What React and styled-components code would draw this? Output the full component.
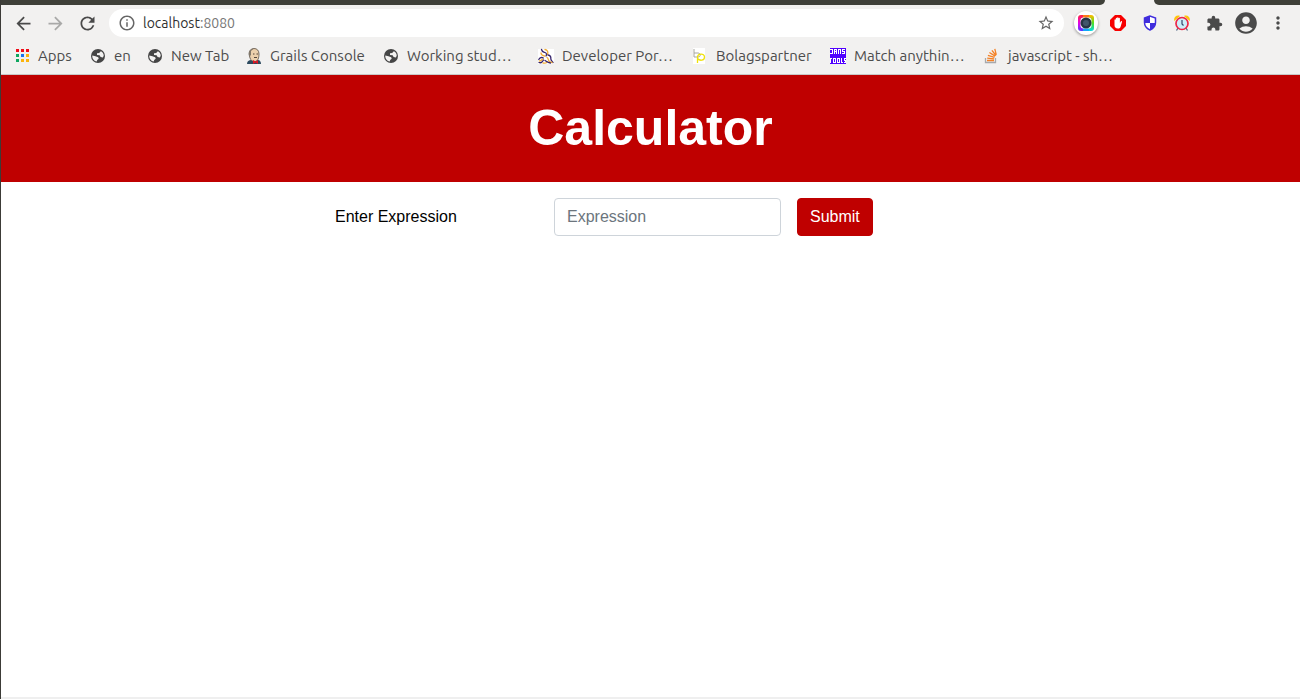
import React from "react";
import styled, { createGlobalStyle } from "styled-components";
import {
  MdArrowBack,
  MdArrowForward,
  MdRefresh,
  MdInfoOutline,
  MdStarBorder,
  MdExtension,
  MdAccountCircle,
  MdMoreVert,
} from "react-icons/md";

const GlobalStyle = createGlobalStyle`
  *, *::before, *::after { box-sizing: border-box; }
  body { margin: 0; background: #fff; }
  svg { display: block; flex: none; }
`;

const Window = styled.div`
  min-height: 100vh;
  display: flex;
  flex-direction: column;
  border-left: 1px solid #3c3b37;
  font-family: "Liberation Sans", Arial, sans-serif;
`;

const Chrome = styled.header`
  background: #f2f1f0;
  border-bottom: 1px solid #c9c8c7;
  color: #4c4c4c;
  font-family: Ubuntu, "Noto Sans", sans-serif;
`;

const TabStrip = styled.div`
  display: flex;
  justify-content: space-between;
  gap: 49px;
  height: 5px;
`;

const StripLeft = styled.div`
  flex: 1;
  background: #3f4039;
  border-bottom-right-radius: 6px;
`;

const StripRight = styled.div`
  width: 146px;
  background: #3f4039;
  border-bottom-left-radius: 6px;
`;

const Toolbar = styled.div`
  display: flex;
  align-items: center;
  gap: 6px;
  height: 36px;
  padding: 0 6px;
`;

const Group = styled.div`
  display: flex;
`;

const IconButton = styled.button`
  display: flex;
  align-items: center;
  justify-content: center;
  width: 32px;
  height: 32px;
  padding: 0;
  border: 0;
  background: none;
  color: ${(p) => (p.$muted ? "#a9a9a8" : "#4a4a4a")};
`;

const Disc = styled.span`
  display: flex;
  align-items: center;
  justify-content: center;
  width: 24px;
  height: 24px;
  border-radius: 50%;
  background: #fff;
  box-shadow: 0 1px 3px rgba(0, 0, 0, 0.4);
`;

const AddressBar = styled.div`
  flex: 1;
  display: flex;
  align-items: center;
  gap: 7px;
  height: 28px;
  padding: 0 9px;
  border-radius: 14px;
  background: #fff;
  color: #666;
`;

const Address = styled.span`
  flex: 1;
  color: #777;
  font-size: 14px;
  line-height: 20px;
`;

const Host = styled.span`
  color: #303030;
`;

const SmallButton = styled.button`
  display: flex;
  padding: 0;
  border: 0;
  background: none;
  color: #666;
`;

const BookmarkBar = styled.nav`
  display: flex;
  height: 33px;
  padding: 1px 0 0 13px;
  overflow: hidden;
`;

const Bookmark = styled.a`
  display: flex;
  flex: none;
  align-items: center;
  gap: 8px;
  width: ${(p) => p.$width}px;
  height: 28px;
  color: #4c4c4c;
  font-size: 15px;
  line-height: 20px;
  text-decoration: none;
  white-space: nowrap;
`;

const Banner = styled.div`
  padding: 16px;
  background: #bf0000;
`;

const Title = styled.h1`
  margin: 0;
  color: #fff;
  font-size: 50px;
  font-weight: 700;
  line-height: 75px;
  text-align: center;
`;

const Page = styled.main`
  flex: 1;
  border-bottom: 2px solid #efefef;
`;

const Form = styled.form`
  display: grid;
  grid-template-columns: 203px 227px auto;
  justify-content: start;
  align-items: center;
  gap: 16px;
  max-width: 631px;
  margin: 16px auto;
  font-size: 16px;
  line-height: 24px;
`;

const Label = styled.label`
  color: #000;
`;

const TextInput = styled.input`
  width: 100%;
  height: 38px;
  padding: 6px 12px;
  border: 1px solid #ced4da;
  border-radius: 4px;
  background: #fff;
  color: #495057;
  font: inherit;
  &::placeholder {
    color: #6c757d;
    opacity: 1;
  }
`;

const SubmitButton = styled.button`
  height: 38px;
  padding: 6px 12px;
  border: 1px solid #bf0000;
  border-radius: 4px;
  background: #bf0000;
  color: #fff;
  font: inherit;
`;

const icon = { width: 16, height: 16, viewBox: "0 0 16 16", "aria-hidden": true };

const AppsIcon = () => (
  <svg {...icon} shapeRendering="crispEdges">
    <path fill="#f00c18" d="M2 1h3v3H2zM7 1h3v3H7zM12 1h3v3h-3z" />
    <path fill="#0fa75f" d="M2 6h3v3H2zM2 11h3v3H2z" />
    <path fill="#1a73f0" d="M7 6h3v3H7z" />
    <path fill="#fbb40c" d="M12 6h3v3h-3zM7 11h3v3H7zM12 11h3v3h-3z" />
  </svg>
);

const GlobeIcon = () => (
  <svg {...icon}>
    <circle cx="8" cy="8" r="7" fill="#454545" />
    <path
      d="M10.800 3.200 9.200 4.900 7 5.200v1.700l2.600.3 1 1.900 2.300.3.800-1.600c.2-1.900-.9-3.800-2.900-4.600z"
      fill="#f2f1f0"
    />
    <path
      d="M2.300 7.500 5.500 8.300l2.700.9.500 1.500-1.500 1.200-.4 1.700c-2.600-.4-4.800-2.900-4.500-6.100z"
      fill="#f2f1f0"
    />
  </svg>
);

const ButlerIcon = () => (
  <svg {...icon}>
    <path d="M1 16c0-3 2-4 4-4h7c2 0 3 2 3 4z" fill="#2d4a5e" />
    <path d="M3 6c0-3 2-5.500 5-5.500s5 2 5 5.500-1 7.500-4 7.500-4-1-5-3.500z" fill="#ecd0ac" stroke="#554c44" strokeWidth="0.800" />
    <path d="M3 4c1-3 3-3.500 5-3.500L5 3v4l-2 2z" fill="#817769" />
    <path d="M7 6h1.500M10.500 6H12M8 9.500h3" stroke="#54453b" fill="none" />
    <path d="m7 12 2.500 1.500L12 12v4l-2.500-1.500L7 16z" fill="#df1522" />
  </svg>
);

const SwirlIcon = () => (
  <svg {...icon}>
    <path fill="#fff" d="M0 1h16v15H0z" />
    <g fill="none" strokeWidth="1.300" strokeLinecap="round">
      <path d="M3.500 1.500c.5 2.500 2 2.500 3.500 3s2 2 1 3.500" stroke="#36236b" />
      <path d="M7 1.500c2.500.5 3.500 2.500 2.500 5" stroke="#f2ae35" />
      <path d="M3 5c0 2 1.500 2.500 3.500 3" stroke="#f2ae35" />
      <path d="M10 7c2.500.5 3 2 2.800 3.500s1 2.500 2.200 4" stroke="#36236b" />
      <path d="M9 9.500c1.500.5 1 2.500 2 3.500s2 1.500 3 1.500" stroke="#f2ae35" />
      <path d="M.8 11.500c1-2 3-2.500 4.500-1.500M1 14.500c2 .8 3.500-.5 4.500-2.500" stroke="#36236b" />
      <path d="M1.500 13c1.500 0 2.500-1 3-1.800M5 15c2 .5 3.500-.2 4-1" stroke="#f2ae35" />
      <path d="M7 12.500c1.500.8 2.500 2 5.500 2.500" stroke="#36236b" />
    </g>
  </svg>
);

const PartnerIcon = () => (
  <svg {...icon}>
    <path fill="#fff" d="M1 0h12v16H1z" />
    <path d="M2 1v8h4c3 0 3-4 0-4H2" fill="none" stroke="#a7a7a0" />
    <path d="M5.500 15V9.500c0-4.500 7-4.500 7-.5s-5 4-7 1.500" fill="none" stroke="#efe20c" strokeWidth="1.300" />
  </svg>
);

const ToolsIcon = () => (
  <svg {...icon} shapeRendering="crispEdges">
    <path fill="#5000ff" d="M0 0h16v16H0z" />
    <path
      fill="none"
      stroke="#fff"
      d="M0 1.500h2.500v4H0M4.500 6V1.500h2V6M4 3.500h3M8.500 6V1.500h2V6M15 1.500h-2.500v2h2v2H12M0 10.500h2M.5 10v5M3.500 10.500h2v4h-2zM7.500 10.500h2v4h-2zM11.500 10v4.500H13M16 10.500h-2v2h1.500v2H14"
    />
  </svg>
);

const StackIcon = () => (
  <svg {...icon}>
    <path d="M1.500 10v4.500h10V10" fill="none" stroke="#a7a9ac" strokeWidth="1.300" />
    <path
      d="M3 12.500h7M3.200 10.100l6.900.7M3.900 7.400l6.600 1.900M5.400 4.500l5.800 3.600M7.900 2.300l4.100 5.200M10.800.800l1.500 6"
      stroke="#f48024"
      strokeWidth="1.300"
      fill="none"
    />
  </svg>
);

const CameraIcon = () => (
  <svg {...icon}>
    <defs>
      <linearGradient id="cam-left" x1="0" y1="0" x2="0" y2="1">
        <stop offset="0" stopColor="#ff2638" />
        <stop offset="0.500" stopColor="#e800e8" />
        <stop offset="1" stopColor="#503cff" />
      </linearGradient>
      <linearGradient id="cam-right" x1="0" y1="0" x2="0" y2="1">
        <stop offset="0" stopColor="#ffb900" />
        <stop offset="0.500" stopColor="#50df20" />
        <stop offset="1" stopColor="#00dce6" />
      </linearGradient>
    </defs>
    <path d="M8 0H3a3 3 0 0 0-3 3v10a3 3 0 0 0 3 3h5z" fill="url(#cam-left)" />
    <path d="M8 0h5a3 3 0 0 1 3 3v10a3 3 0 0 1-3 3H8z" fill="url(#cam-right)" />
    <path d="M5 0h6v3H5z" fill="#ff7818" />
    <path d="M5 13h6v3H5z" fill="#12a6fa" />
    <rect x="2.500" y="2.500" width="11" height="11" rx="3" fill="#fff" />
    <circle cx="8" cy="8" r="5.500" fill="#263545" />
    <circle cx="8" cy="8" r="3" fill="#41566b" />
  </svg>
);

const HandIcon = () => (
  <svg {...icon}>
    <path d="M5 0h6l5 5v6l-5 5H5l-5-5V5z" fill="#f70000" />
    <path
      d="M4.500 8V5c0-1 1.300-1 1.300 0V3.500c0-1 1.300-1 1.300 0V3c0-1 1.400-1 1.400 0v.5c0-1 1.400-1 1.400 0V8l.8-1.500c.6-1 1.600-.5 1.300.4L10.500 12c-.5 1.300-1.300 1.500-2.500 1.500-2.500 0-3.500-1.200-3.500-3.500z"
      fill="#fff"
    />
  </svg>
);

const ShieldIcon = () => (
  <svg {...icon}>
    <path d="M8 1 2.500 3v4.500c0 3.300 2 6 5.500 7.500 3.500-1.500 5.500-4.200 5.500-7.500V3z" fill="#fff" stroke="#402ddd" strokeWidth="1.500" />
    <path d="M8 1v7H2.500V3zM8 8h5.500c-.3 3-2.200 5.500-5.500 7z" fill="#402ddd" />
  </svg>
);

const ClockIcon = () => (
  <svg {...icon}>
    <path d="m4 13-1.500 2.500M12 13l1.500 2.500" stroke="#536986" strokeWidth="1.300" />
    <path d="M.3 6C-.8 2.500 2.500-.5 6 1zM15.700 6c1.100-3.500-2.200-6.500-5.700-5z" fill="#ffc40b" />
    <circle cx="8" cy="8.500" r="6" fill="#cceefa" stroke="#ee2748" strokeWidth="1.700" />
    <path d="M8 5v4l1.500 1.500" stroke="#34476a" strokeWidth="1.200" fill="none" />
  </svg>
);

const bookmarks = [
  { label: "Apps", width: 76, Icon: AppsIcon },
  { label: "en", width: 57, Icon: GlobeIcon },
  { label: "New Tab", width: 99, Icon: GlobeIcon },
  { label: "Grails Console", width: 137, Icon: ButlerIcon },
  { label: "Working stud…", width: 155, Icon: GlobeIcon },
  { label: "Developer Por…", width: 154, Icon: SwirlIcon },
  { label: "Bolagspartner", width: 138, Icon: PartnerIcon },
  { label: "Match anythin…", width: 154, Icon: ToolsIcon },
  { label: "javascript - sh…", width: 154, Icon: StackIcon },
];

const BrowserChrome = () => (
  <Chrome>
    <TabStrip>
      <StripLeft />
      <StripRight />
    </TabStrip>
    <Toolbar>
      <Group>
        <IconButton aria-label="Back"><MdArrowBack size={21} /></IconButton>
        <IconButton aria-label="Forward" $muted><MdArrowForward size={21} /></IconButton>
        <IconButton aria-label="Reload"><MdRefresh size={21} /></IconButton>
      </Group>
      <AddressBar>
        <SmallButton aria-label="Site information"><MdInfoOutline size={18} /></SmallButton>
        <Address><Host>localhost</Host>:8080</Address>
        <SmallButton aria-label="Bookmark this page"><MdStarBorder size={18} /></SmallButton>
      </AddressBar>
      <Group>
        <IconButton aria-label="Screen capture"><Disc><CameraIcon /></Disc></IconButton>
        <IconButton aria-label="Content blocker"><HandIcon /></IconButton>
        <IconButton aria-label="Privacy shield"><ShieldIcon /></IconButton>
        <IconButton aria-label="Timer"><ClockIcon /></IconButton>
        <IconButton aria-label="Extensions"><MdExtension size={17} /></IconButton>
        <IconButton aria-label="Profile"><MdAccountCircle size={26} /></IconButton>
        <IconButton aria-label="Menu"><MdMoreVert size={20} /></IconButton>
      </Group>
    </Toolbar>
    <BookmarkBar aria-label="Bookmarks">
      {bookmarks.map(({ label, width, Icon }) => (
        <Bookmark key={label} href="#" $width={width}>
          <Icon />
          {label}
        </Bookmark>
      ))}
    </BookmarkBar>
  </Chrome>
);

export default function App() {
  return (
    <Window>
      <GlobalStyle />
      <BrowserChrome />
      <Banner>
        <Title>Calculator</Title>
      </Banner>
      <Page>
        <Form onSubmit={(e) => e.preventDefault()}>
          <Label htmlFor="expression">Enter Expression</Label>
          <TextInput id="expression" type="text" placeholder="Expression" />
          <SubmitButton type="submit">Submit</SubmitButton>
        </Form>
      </Page>
    </Window>
  );
}
